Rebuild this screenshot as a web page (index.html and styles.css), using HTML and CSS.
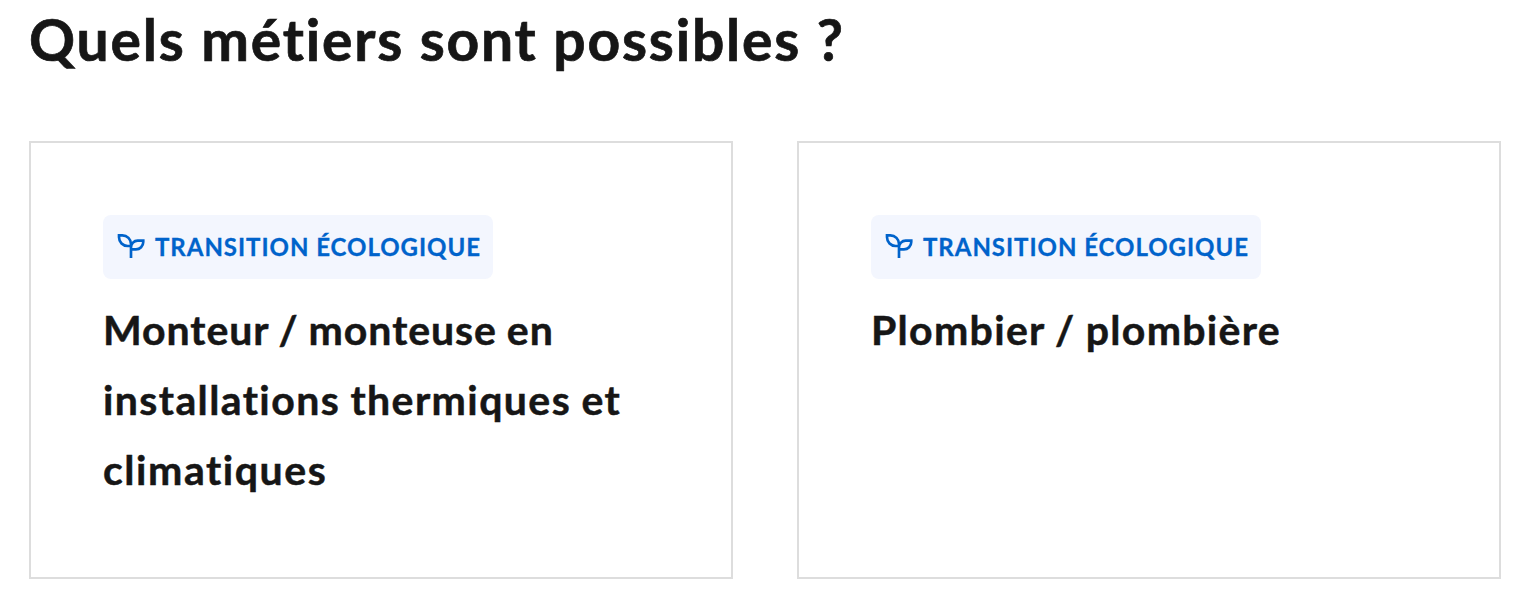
FILE: index.html
```html
<!DOCTYPE html>
<html lang="fr">
<head>
<meta charset="utf-8">
<title>Quels métiers sont possibles ?</title>
<link rel="stylesheet" href="styles.css">
</head>
<body>
<main class="page">
  <h2 class="title">Quels métiers sont possibles ?</h2>
  <div class="cards">
    <article class="card">
      <p class="badge"><svg class="leaf" viewBox="0 0 24 24"><path d="M3 4h2.500A6.500 6.500 0 0 1 12 10.500V12H9.500A6.500 6.500 0 0 1 3 5.500zM12 14.500V13a5 5 0 0 1 5-5h4.200v1a5.500 5.500 0 0 1-5.500 5.500zM12 12v9"/></svg><span class="badge-text">TRANSITION ÉCOLOGIQUE</span></p>
      <h3 class="name"><span class="line l1">Monteur / monteuse en</span> <span class="line l2">installations thermiques et</span> <span class="line l3">climatiques</span></h3>
    </article>
    <article class="card">
      <p class="badge"><svg class="leaf" viewBox="0 0 24 24"><path d="M3 4h2.500A6.500 6.500 0 0 1 12 10.500V12H9.500A6.500 6.500 0 0 1 3 5.500zM12 14.500V13a5 5 0 0 1 5-5h4.200v1a5.500 5.500 0 0 1-5.500 5.500zM12 12v9"/></svg><span class="badge-text">TRANSITION ÉCOLOGIQUE</span></p>
      <h3 class="name"><span class="line l4">Plombier / plombière</span></h3>
    </article>
  </div>
</main>
</body>
</html>
```
FILE: styles.css
```css
* { box-sizing: border-box; margin: 0; padding: 0; }
body { background: #fff; color: #161616; font-family: Lato, sans-serif; font-variant-ligatures: none; overflow: hidden; }
.page { padding: 3px 21px 0 29px; }
.title { height: 138px; font-size: 57px; line-height: 72px; font-weight: 700; letter-spacing: 1.8px; white-space: nowrap; -webkit-text-stroke: 0.7px currentColor; }
.cards { display: grid; grid-template-columns: 704px 704px; gap: 64px; }
.card { height: 438px; border: 2px solid #ddd; padding: 72px; }
.badge { display: flex; align-items: center; width: 390px; height: 64px; padding: 0 12px; border-radius: 8px; background: #f3f6fe; color: #0063cb; font-size: 24px; font-weight: 700; line-height: 40px; letter-spacing: 0.97px; white-space: nowrap; -webkit-text-stroke: 0.3px currentColor; }
.leaf { width: 32px; height: 32px; margin: 0 8px 2px 0; fill: none; stroke: currentColor; stroke-width: 2; flex: none; }
.name { margin-top: 16px; font-size: 41px; line-height: 70px; font-weight: 700; -webkit-text-stroke: 0.5px currentColor; word-spacing: -1px; }
.line { display: block; white-space: nowrap; width: max-content; }
.l1 { letter-spacing: 0.95px; }
.l2 { letter-spacing: 1.4px; }
.l3 { letter-spacing: 1.55px; }
.l4 { letter-spacing: 1.3px; }
```
